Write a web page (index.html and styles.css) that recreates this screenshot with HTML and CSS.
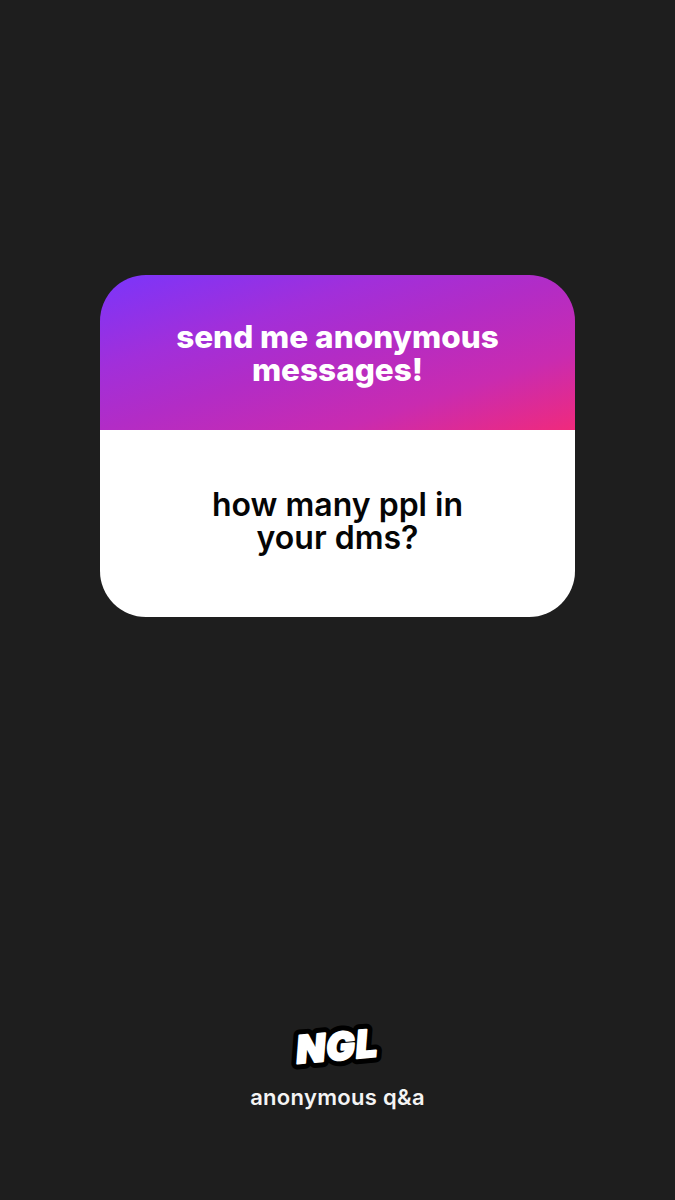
FILE: index.html
```html
<!DOCTYPE html>
<html lang="en">
  <head>
    <meta charset="UTF-8" />
    <meta name="viewport" content="width=device-width, initial-scale=1.0" />
    <title>NGL</title>
    <link rel="stylesheet" href="styles.css">
  </head>
  <body>
    <div class="card">
      <div class="card-head">
        <h1>send me anonymous<br />messages!</h1>
      </div>
      <div class="card-body">
        <p>how many ppl in<br />your dms?</p>
      </div>
    </div>

    <div class="footer">
      <svg class="logo" width="120" height="60" viewBox="0 0 120 60">
        <g transform="rotate(-5 60 30)">
          <text class="logo-back" x="60" y="44">NGL</text>
          <text class="logo-front" x="60" y="44">NGL</text>
        </g>
      </svg>
      <p class="tagline">anonymous q&amp;a</p>
    </div>
  </body>
</html>
```
FILE: styles.css
```css
body {
  display: flex;
  flex-direction: column;
  align-items: center;
  height: 1200px;
  margin: 0;
  padding-top: 275px;
  box-sizing: border-box;
  overflow: hidden;
  font-family: Inter, "Liberation Sans", sans-serif;
  background-color: #1e1e1e;
}
.card {
  width: 475px;
  border-radius: 46px;
  overflow: hidden;
  text-align: center;
}
.card-head {
  display: flex;
  justify-content: center;
  align-items: center;
  height: 155px;
  background: linear-gradient(to bottom right, #7a35fb 0%, #a12fda 30%, #b22cc6 50%, #c92bb0 75%, #f02a7c 100%);
}
.card-head h1 {
  margin: 0;
  font-size: 31.5px;
  line-height: 33px;
  font-weight: 800;
  color: white;
}
.card-body {
  display: flex;
  justify-content: center;
  align-items: center;
  height: 187px;
  padding-bottom: 6px;
  box-sizing: border-box;
  background-color: white;
}
.card-body p {
  margin: 0;
  font-size: 32px;
  line-height: 33px;
  font-weight: 600;
  color: #050505;
}
.footer {
  display: flex;
  flex-direction: column;
  align-items: center;
  margin-top: auto;
  padding-bottom: 90px;
}
.logo {
  display: block;
  font-size: 38px;
  font-weight: 900;
  font-style: italic;
  letter-spacing: 1px;
  text-anchor: middle;
  stroke-linejoin: round;
}
.logo-back {
  fill: black;
  stroke: black;
  stroke-width: 12px;
}
.logo-front {
  fill: white;
  stroke: white;
  stroke-width: 2px;
}
.tagline {
  margin: 8px 0 0;
  font-size: 22px;
  line-height: 26px;
  font-weight: 600;
  letter-spacing: 0.3px;
  color: #f4f4f4;
}
```
